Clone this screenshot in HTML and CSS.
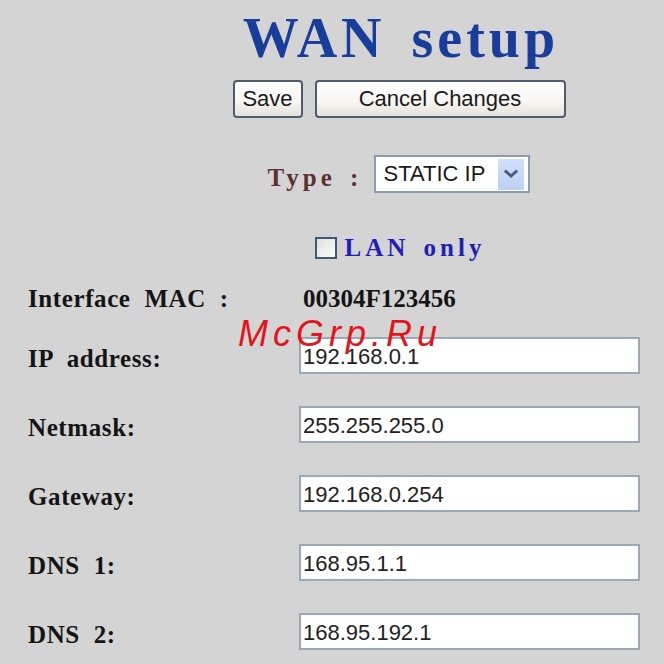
FILE: index.html
```html
<!DOCTYPE html>
<html>
<head>
<meta charset="utf-8">
<title>WAN setup</title>
<link rel="stylesheet" href="styles.css">
</head>
<body>
<div class="page">
  <header class="head">
    <h1 class="title">WAN setup</h1>
    <div class="actions">
      <button class="btn btn-save" type="button">Save</button>
      <button class="btn btn-cancel" type="button">Cancel Changes</button>
    </div>
    <div class="type-row">
      <span class="type-label">Type :</span>
      <div class="select">
        <span class="select-value">STATIC IP</span>
        <span class="select-arrow">
          <svg width="14" height="10" viewBox="0 0 14 10"><path d="M2 2.5 L7 7 L12 2.5" fill="none" stroke="#4a5d84" stroke-width="3" stroke-linecap="square"/></svg>
        </span>
      </div>
    </div>
    <label class="lan">
      <span class="check"></span>
      <span class="lan-text">LAN only</span>
    </label>
  </header>

  <section class="fields">
    <div class="row row-mac">
      <span class="label">Interface MAC :</span>
      <span class="mac">00304F123456</span>
    </div>
    <div class="row">
      <span class="label">IP address:</span>
      <input class="field" type="text" value="192.168.0.1" readonly>
    </div>
    <div class="row">
      <span class="label">Netmask:</span>
      <input class="field" type="text" value="255.255.255.0" readonly>
    </div>
    <div class="row">
      <span class="label">Gateway:</span>
      <input class="field" type="text" value="192.168.0.254" readonly>
    </div>
    <div class="row">
      <span class="label">DNS 1:</span>
      <input class="field" type="text" value="168.95.1.1" readonly>
    </div>
    <div class="row">
      <span class="label">DNS 2:</span>
      <input class="field" type="text" value="168.95.192.1" readonly>
    </div>
  </section>

  <div class="watermark">McGrp.Ru</div>
</div>
</body>
</html>
```

FILE: styles.css
```css
html, body {
  margin: 0;
  padding: 0;
  background: #d4d4d4;
}

.page {
  position: relative;
  width: 664px;
  height: 664px;
  overflow: hidden;
  padding-top: 6px;
  box-sizing: border-box;
  font-family: "Liberation Serif", "Times New Roman", serif;
}

.head {
  padding-left: 134px;
  display: flex;
  flex-direction: column;
  align-items: center;
}

.title {
  margin: 0 0 0 4px;
  font-size: 56px;
  line-height: 64px;
  font-weight: bold;
  color: #183d9a;
  letter-spacing: 4px;
  word-spacing: 8px;
}

.actions {
  margin-top: 10px;
  display: flex;
  gap: 12px;
}

.btn {
  height: 38px;
  box-sizing: border-box;
  border: 2px solid #4f5c70;
  border-radius: 4px;
  background: linear-gradient(#ffffff 0%, #f7f6f2 60%, #e4e1d9 100%);
  font-family: "Liberation Sans", Arial, sans-serif;
  font-size: 22px;
  color: #1a1a1a;
  padding: 0;
}

.btn-save { width: 70px; }
.btn-cancel { width: 251px; }

.type-row {
  margin-top: 37px;
  display: flex;
  align-items: center;
  gap: 12px;
  height: 38px;
}

.type-label {
  font-size: 25px;
  font-weight: bold;
  color: #5e2f30;
  letter-spacing: 4px;
  word-spacing: 4px;
  padding-top: 8px;
}

.select {
  width: 156px;
  height: 38px;
  box-sizing: border-box;
  border: 2px solid #8c9cb0;
  background: #ffffff;
  display: flex;
  align-items: center;
  padding: 2px 4px 2px 7px;
}

.select-value {
  flex: 1;
  font-family: "Liberation Sans", Arial, sans-serif;
  font-size: 22px;
  color: #1a1a1a;
}

.select-arrow {
  width: 26px;
  height: 31px;
  background: linear-gradient(#d3e0fa, #bccff3);
  display: flex;
  align-items: center;
  justify-content: center;
}

.lan {
  margin-top: 43px;
  margin-left: 2px;
  height: 24px;
  display: flex;
  align-items: center;
  gap: 8px;
}

.check {
  width: 22px;
  height: 22px;
  box-sizing: border-box;
  border: 2px solid #3d5a7c;
  background: linear-gradient(135deg, #e2e2dc, #fbfbf9);
}

.lan-text {
  font-size: 25px;
  font-weight: bold;
  color: #2020b8;
  letter-spacing: 4px;
  word-spacing: 4px;
  line-height: 24px;
}

.fields {
  margin-top: 20px;
  padding-left: 28px;
  display: flex;
  flex-direction: column;
  gap: 32px;
}

.row {
  display: grid;
  grid-template-columns: 271px 341px;
  height: 37px;
  align-items: start;
}

.row-mac {
  margin-bottom: -12px;
}

.label {
  font-size: 25px;
  font-weight: bold;
  color: #141414;
  line-height: 37px;
  padding-top: 3px;
  letter-spacing: 0.6px;
  word-spacing: 7px;
}

.row-mac .label { padding-top: 0; }

.mac {
  font-size: 25px;
  font-weight: bold;
  color: #141414;
  line-height: 37px;
  padding-left: 4px;
}

.field {
  width: 341px;
  height: 37px;
  box-sizing: border-box;
  margin: 0;
  border: 2px solid #9aa8b8;
  background: #ffffff;
  font-family: "Liberation Sans", Arial, sans-serif;
  font-size: 22px;
  color: #222222;
  padding: 2px 2px 0 2px;
  outline: none;
}

.watermark {
  position: absolute;
  left: 238px;
  top: 316px;
  font-family: "Liberation Sans", Arial, sans-serif;
  font-style: italic;
  font-size: 36px;
  line-height: 1;
  letter-spacing: 5px;
  color: #e3141b;
  pointer-events: none;
}
```
